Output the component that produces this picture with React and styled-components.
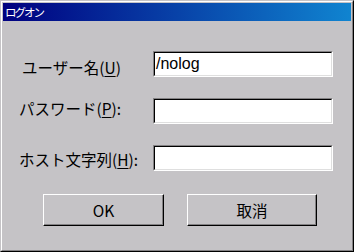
import React from "react";
import styled, { createGlobalStyle } from "styled-components";

const Global = createGlobalStyle`
  html, body { margin: 0; padding: 0; background: #c5c3c6; }
  body { font-family: "Noto Sans CJK JP", "Liberation Sans", sans-serif; }
`;

const Window = styled.div`
  box-sizing: border-box;
  width: 354px;
  height: 252px;
  background: #c5c3c6;
  border-top: 1px solid #c5c3c6;
  border-left: 1px solid #c5c3c6;
  border-right: 1px solid #000;
  border-bottom: 1px solid #000;
  display: flex;
`;

const Inner = styled.div`
  flex: 1;
  display: flex;
  flex-direction: column;
  border-top: 1px solid #fff;
  border-left: 1px solid #fff;
  border-right: 1px solid #838183;
  border-bottom: 1px solid #838183;
  padding: 1px;
`;

const TitleBar = styled.div`
  height: 18px;
  background: linear-gradient(to right, #000080, #1084d0);
  color: #fff;
  font-size: 11.5px;
  line-height: 18px;
  padding-left: 2px;
  letter-spacing: -2px;
`;

const Body = styled.div`
  display: flex;
  flex-direction: column;
  padding: 30px 0 0 14px;
`;

const Row = styled.div`
  display: flex;
  align-items: center;
  height: 26px;
  margin-bottom: 21px;
`;

const Label = styled.label`
  width: 136px;
  padding-left: ${(p) => p.$indent || 0}px;
  box-sizing: border-box;
  font-size: 15.5px;
  color: #000;
  position: relative;
  top: ${(p) => p.$dy || 0}px;
  white-space: nowrap;
  u { text-decoration-thickness: 1px; text-underline-offset: 2px; }
`;

const Input = styled.div`
  box-sizing: border-box;
  width: 180px;
  height: 26px;
  background: #fff;
  border-top: 1px solid #838183;
  border-left: 1px solid #838183;
  border-right: 1px solid #fff;
  border-bottom: 1px solid #fff;
  display: flex;
`;

const InputInner = styled.div`
  flex: 1;
  border-top: 1px solid #000;
  border-left: 1px solid #000;
  border-right: 1px solid #dfdfdf;
  border-bottom: 1px solid #dfdfdf;
  font-family: "Liberation Sans", sans-serif;
  font-size: 16px;
  line-height: 21px;
  padding-left: 1px;
  color: #000;
`;

const Buttons = styled.div`
  display: flex;
  margin-top: 2px;
  padding-left: 26px;
  gap: 23px;
`;

const Button = styled.button`
  box-sizing: border-box;
  width: ${(p) => p.$w}px;
  height: 32px;
  background: #c5c3c6;
  border-top: 1px solid #fff;
  border-left: 1px solid #fff;
  border-right: 1px solid #000;
  border-bottom: 1px solid #000;
  box-shadow: inset -1px -1px 0 #838183;
  font-family: "Noto Sans CJK JP", "Liberation Sans", sans-serif;
  font-size: 15.5px;
  color: #000;
  padding: 0;
`;

export default function App() {
  return (
    <>
      <Global />
      <Window>
        <Inner>
          <TitleBar>ログオン</TitleBar>
          <Body>
            <Row>
              <Label $indent={5} $dy={3}>
                ユーザー名(<u>U</u>)
              </Label>
              <Input>
                <InputInner>/nolog</InputInner>
              </Input>
            </Row>
            <Row>
              <Label $indent={2} $dy={-3}>
                パスワード(<u>P</u>):
              </Label>
              <Input>
                <InputInner />
              </Input>
            </Row>
            <Row>
              <Label $indent={2} $dy={1}>
                ホスト文字列(<u>H</u>):
              </Label>
              <Input>
                <InputInner />
              </Input>
            </Row>
            <Buttons>
              <Button $w={121}>OK</Button>
              <Button $w={130}>取消</Button>
            </Buttons>
          </Body>
        </Inner>
      </Window>
    </>
  );
}
